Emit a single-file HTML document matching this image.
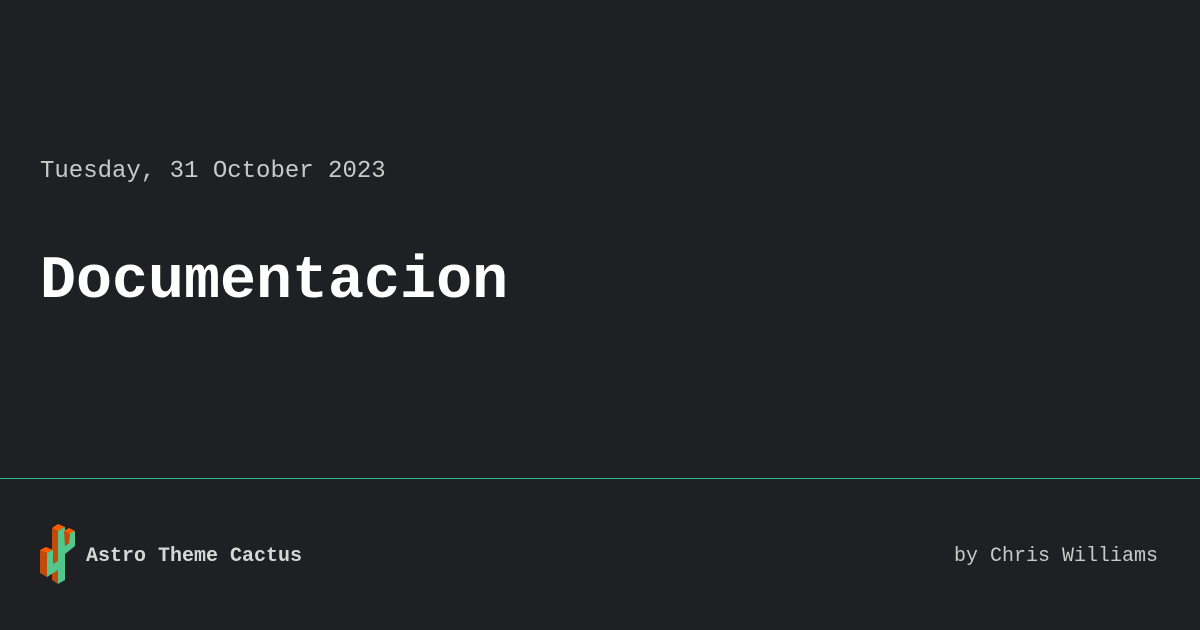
<!DOCTYPE html>
<html><head><meta charset="utf-8"><style>
html,body{margin:0;padding:0}
body{width:1200px;height:630px;background:#1f2023;position:relative;overflow:hidden;font-family:"Liberation Mono",monospace}
.date{position:absolute;left:40px;top:156px;font-size:24px;color:#c9c9c9;line-height:32px}
.title{position:absolute;left:40px;top:242px;font-size:60px;font-weight:bold;color:#fff;line-height:80px}
.line{position:absolute;left:0;top:478px;width:1200px;height:1px;background:#2bbc89}
.brand{position:absolute;left:86px;top:543px;font-size:20px;font-weight:bold;color:#d6d6d6;line-height:28px}
.by{position:absolute;right:42px;top:543px;font-size:20px;color:#c9c9c9;line-height:28px}
svg{position:absolute;left:38px;top:522px}
</style></head><body>
<div class="date">Tuesday, 31 October 2023</div>
<div class="title">Documentacion</div>
<div class="line"></div>
<svg width="40" height="64" viewBox="0 0 40 64">
<polygon points="14,6 20,2 27,5 20,9" fill="#ff5d01"/>
<polygon points="14,6 20,9 20,62 14,58" fill="#c24a0a"/>
<polygon points="20,9 27,5 27,58 20,62" fill="#53c68c"/>
<polygon points="26,9 31,6 37,9 32,12" fill="#ff5d01"/>
<polygon points="27,24 31,21 31,12 37,9 37,24 27,32" fill="#53c68c"/>
<polygon points="26,9 32,12 31,21 27,24" fill="#c24a0a"/>
<polygon points="2,28 8,25 15,28 9,31" fill="#ff5d01"/>
<polygon points="2,28 9,31 9,55 2,51" fill="#c24a0a"/>
<polygon points="9,31 15,28 15,42 20,39 20,48 9,55" fill="#53c68c"/>
</svg>
<div class="brand">Astro Theme Cactus</div>
<div class="by">by Chris Williams</div>
</body></html>
